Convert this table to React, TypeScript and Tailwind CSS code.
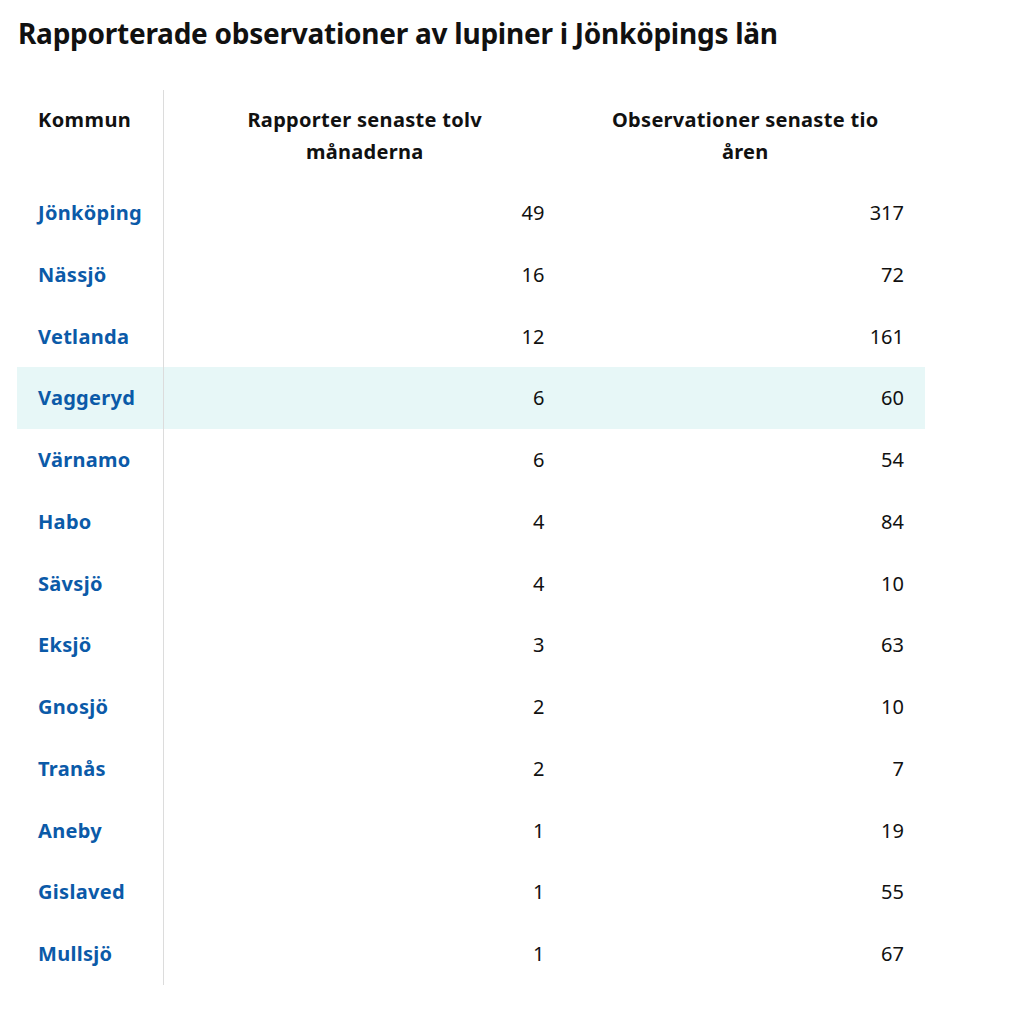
const rows: [string, number, number][] = [
  ["Jönköping", 49, 317],
  ["Nässjö", 16, 72],
  ["Vetlanda", 12, 161],
  ["Vaggeryd", 6, 60],
  ["Värnamo", 6, 54],
  ["Habo", 4, 84],
  ["Sävsjö", 4, 10],
  ["Eksjö", 3, 63],
  ["Gnosjö", 2, 10],
  ["Tranås", 2, 7],
  ["Aneby", 1, 19],
  ["Gislaved", 1, 55],
  ["Mullsjö", 1, 67],
];

export default function App() {
  return (
    <div className="min-h-screen bg-white text-[#111] font-['Noto_Sans',sans-serif]">
      <h1 className="pl-[18px] pt-[14px] text-[28px] font-bold leading-[38px] tracking-[-0.25px]">
        Rapporterade observationer av lupiner i Jönköpings län
      </h1>

      <table className="mt-[38px] ml-[17px] w-[908px] border-collapse text-[20px] leading-[31.75px]">
        <thead>
          <tr>
            <th className="w-[146px] border-r border-[#dcdcdc] px-[21px] pt-[14px] pb-[14px] text-left align-top font-bold leading-[32px] tracking-[0.4px]">
              Kommun
            </th>
            <th className="w-[402px] px-[21px] pt-[14px] pb-[14px] text-center align-top font-bold leading-[32px] tracking-[0.3px]">
              Rapporter senaste tolv<br />månaderna
            </th>
            <th className="px-[21px] pt-[14px] pb-[14px] text-center align-top font-bold leading-[32px] tracking-[0.3px]">
              Observationer senaste tio<br />åren
            </th>
          </tr>
        </thead>
        <tbody>
          {rows.map(([name, a, b], i) => (
            <tr key={name} className={i === 3 ? "bg-[#e7f7f7]" : ""}>
              <td className="border-r border-[#dcdcdc] px-[21px] py-[15px] font-bold tracking-[0.3px] text-[#0b5aa8]">
                {name}
              </td>
              <td className="px-[21px] py-[15px] text-right">{a}</td>
              <td className="px-[21px] py-[15px] text-right">{b}</td>
            </tr>
          ))}
        </tbody>
      </table>
    </div>
  );
}
